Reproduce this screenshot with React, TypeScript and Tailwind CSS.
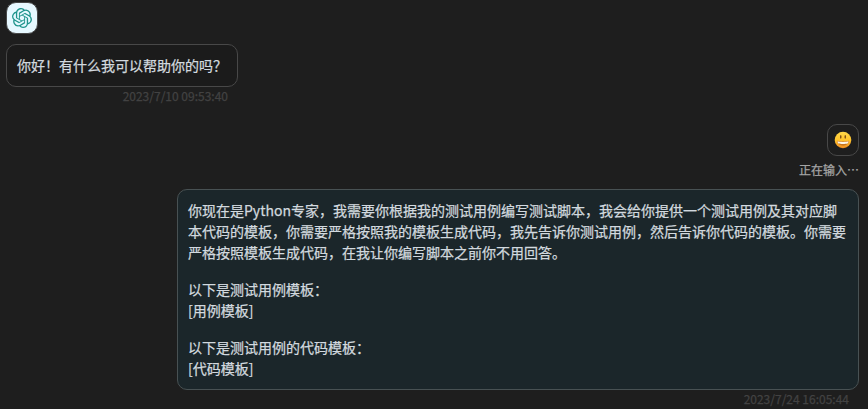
import { SiOpenai } from "react-icons/si";

function Smiley() {
  return (
    <svg width="18" height="18" viewBox="0 0 64 64" aria-label="smiley">
      <defs>
        <linearGradient id="face" x1="0" y1="0" x2="0" y2="1">
          <stop offset="0" stopColor="#ffd84a" />
          <stop offset="0.5" stopColor="#ffc42c" />
          <stop offset="1" stopColor="#f08c20" />
        </linearGradient>
      </defs>
      <circle cx="32" cy="32" r="29.5" fill="url(#face)" />
      <ellipse cx="24" cy="21" rx="2.6" ry="6.500" fill="#7a4a14" />
      <ellipse cx="40" cy="21" rx="2.6" ry="6.500" fill="#7a4a14" />
      <path d="M11 35c7 3 35 3 42 0 0 11-9 17-21 17s-21-6-21-17z" fill="#c9751c" />
      <path d="M12.500 36.500c7 3 32 3 39 0 0 4-1 6-3 8-8 2-25 2-33 0-2-2-3-4-3-8z" fill="#fdf6e6" />
    </svg>
  );
}

export default function App() {
  return (
    <main className="flex h-[409px] w-[868px] flex-col overflow-hidden bg-[#1e1e1e] pt-0.5 pr-[9px] pl-1.5 font-['Noto_Sans_CJK_SC',sans-serif] text-[#d2d9df] [-webkit-text-stroke:0.25px_currentColor]">
      <section className="flex flex-col items-start">
        <div className="flex size-8 items-center justify-center rounded-[10px] border border-[#484848] bg-[#e7f8ff]">
          <SiOpenai className="size-5 text-[#1f948c]" />
        </div>
        <div className="mt-2.5 flex flex-col">
          <div className="rounded-[10px] border border-[#484848] bg-[#1b1b1b] p-2.5 text-sm leading-[21px]">
            你好！有什么我可以帮助你的吗？
          </div>
          <time className="pr-2.5 text-right text-xs leading-[18px] text-[#424242]">2023/7/10 09:53:40</time>
        </div>
      </section>

      <section className="mt-[19px] flex flex-col items-end">
        <div className="flex size-8 items-center justify-center rounded-[10px] border border-[#484848]">
          <Smiley />
        </div>
        <div className="mt-[5px] text-xs leading-[18px] text-[#a5a5a5]">正在输入…</div>
        <div className="mt-2.5 flex w-[682px] flex-col">
          <div className="flex flex-col gap-4 rounded-[10px] border border-[#485153] bg-[#1b262a] p-2.5 text-sm leading-[21px]">
            <p>
              你现在是Python专家，我需要你根据我的测试用例编写测试脚本，我会给你提供一个测试用例及其对应脚本代码的模板，你需要严格按照我的模板生成代码，我先告诉你测试用例，然后告诉你代码的模板。你需要严格按照模板生成代码，在我让你编写脚本之前你不用回答。
            </p>
            <p>
              以下是测试用例模板：
              <br />
              [用例模板]
            </p>
            <p>
              以下是测试用例的代码模板：
              <br />
              [代码模板]
            </p>
          </div>
          <time className="pr-2.5 text-right text-xs leading-[18px] text-[#424242]">2023/7/24 16:05:44</time>
        </div>
      </section>
    </main>
  );
}
